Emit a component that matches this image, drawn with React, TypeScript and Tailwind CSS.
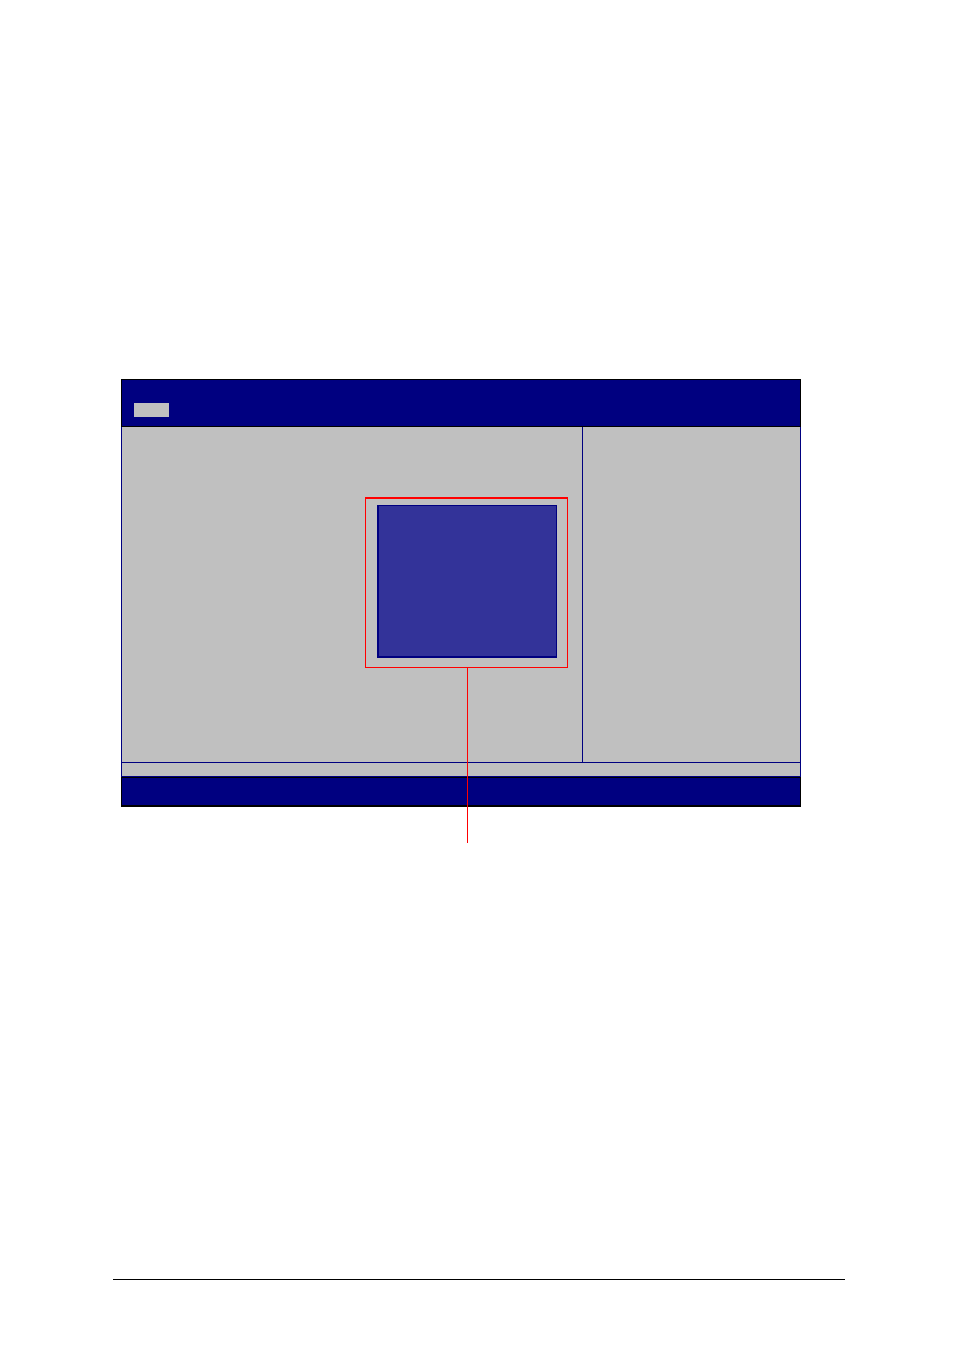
import React from "react";

// Header bar with the selected tab
const TitleBar: React.FC = () => (
  <header className="h-12 border border-black bg-[#000080] pl-3 pt-[23px]">
    <div className="h-3.5 w-[35px] bg-[#c0c0c0]" />
  </header>
);

// Popup with its outline and the callout line that runs below the screen
const OptionsPopup: React.FC = () => (
  <div className="relative h-[171px] w-[203px] border border-t-2 border-[#ff0000] pb-[9px] pl-[11px] pr-2.5 pt-1.5">
    <div className="h-full border border-b-2 border-l-2 border-[#000080] bg-[#333399]" />
    <div className="absolute left-1/2 top-full h-44 w-px bg-[#ff0000]" />
  </div>
);

const SetupScreen: React.FC = () => (
  <section className="ml-2 mr-11">
    <TitleBar />

    <div className="border-x border-b border-[#000080] bg-[#c0c0c0]">
      {/* Settings and help panels */}
      <div className="flex border-b border-[#000080]">
        <main className="flex flex-1 justify-end pb-[94px] pr-3.5 pt-[70px]">
          <OptionsPopup />
        </main>
        <aside className="w-[218px] border-l border-[#000080]" />
      </div>
      <div className="h-[13px]" />
    </div>

    {/* Key legend bar */}
    <div className="h-[30px] border border-b-2 border-black bg-[#000080]" />
  </section>
);

const App: React.FC = () => {
  return (
    <div className="flex min-h-screen flex-col bg-white pl-[113px] pr-[109px] pt-[379px]">
      <SetupScreen />
      <footer className="mt-auto h-[71px] border-t border-black" />
    </div>
  );
};

export default App;
